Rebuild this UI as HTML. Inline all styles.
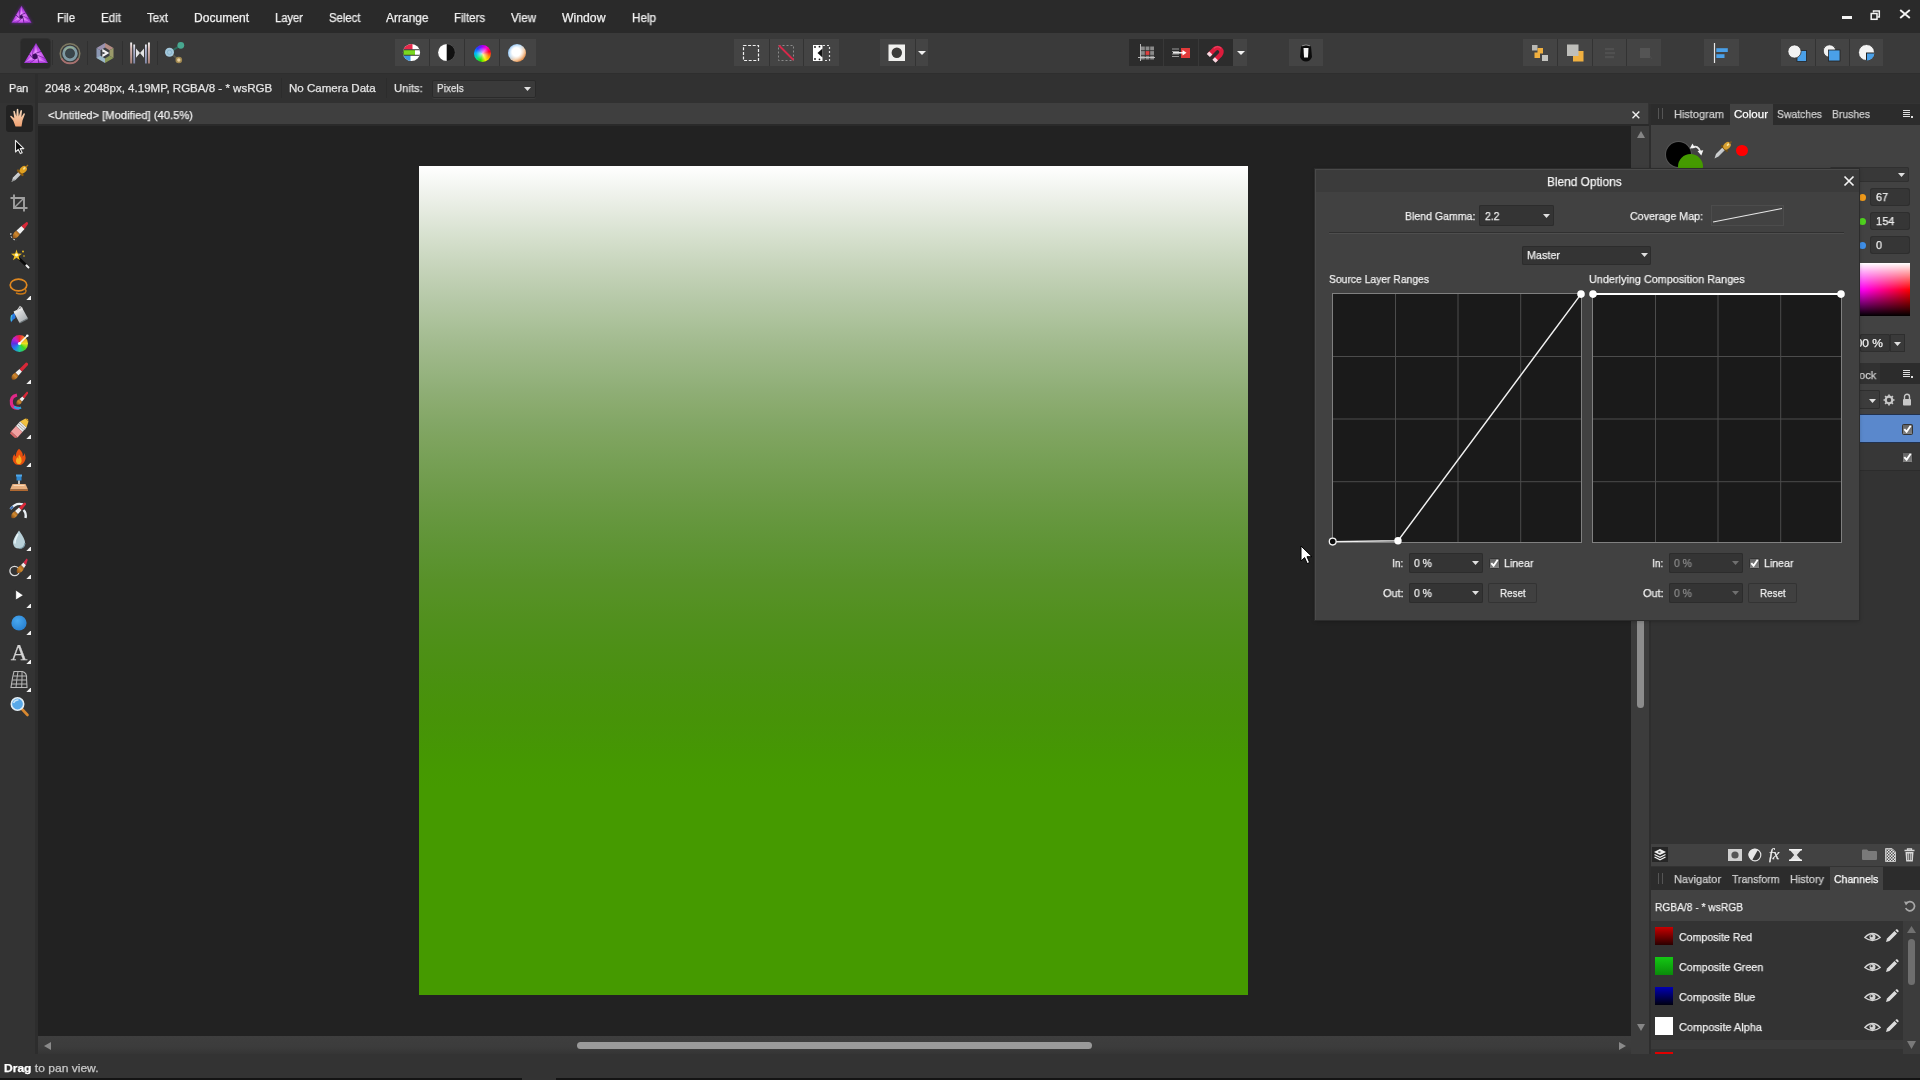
<!DOCTYPE html>
<html lang="en"><head><meta charset="utf-8"><title>Affinity Photo - Blend Options</title>
<style>
html,body{margin:0;padding:0;}
body{width:1920px;height:1080px;overflow:hidden;background:#333333;font-family:'Liberation Sans', sans-serif;position:relative;}
body>div,body>span,body>svg{position:absolute;display:block;}
body>span{white-space:pre;transform-origin:0 50%;will-change:transform;-webkit-text-stroke:0.25px;}
</style></head><body>
<div style="left:0px;top:0px;width:1920px;height:33px;background:#2a2a2a;"></div>
<div style="left:0px;top:33px;width:1920px;height:41px;background:#3a3a3a;"></div>
<div style="left:0px;top:73px;width:1920px;height:1px;background:#2e2e2e;"></div>
<div style="left:0px;top:74px;width:1920px;height:29px;background:#313131;"></div>
<div style="left:0px;top:103px;width:35px;height:951px;background:#333333;"></div>
<div style="left:35px;top:74px;width:3px;height:980px;background:#2d2d2d;"></div>
<div style="left:38px;top:104px;width:1593px;height:934px;background:#222222;"></div>
<div style="left:38px;top:103px;width:1610px;height:21.5px;background:#3f3f3f;"></div>
<div style="left:38px;top:124px;width:1611px;height:2px;background:#2a2a2a;"></div>
<div style="left:1631px;top:126px;width:18px;height:912px;background:#3c3c3c;"></div>
<div style="left:38px;top:1036px;width:1593px;height:18px;background:linear-gradient(#3e3e3e 0%,#3c3c3c 60%,#353535 100%);"></div>
<div style="left:1631px;top:1037px;width:18px;height:17px;background:#3c3c3c;"></div>
<div style="left:0px;top:1054px;width:1920px;height:24px;background:#333333;"></div>
<div style="left:0px;top:1078px;width:1920px;height:2px;background:#141414;"></div>
<div style="left:522px;top:1078px;width:34px;height:2px;background:#333;"></div>
<div style="left:1649px;top:104px;width:271px;height:950px;background:#333333;"></div>
<div style="left:1649px;top:104px;width:2px;height:950px;background:#2e2e2e;"></div>
<span style="left:57px;top:10.1px;font-size:12px;line-height:16px;color:#f0f0f0;transform:scaleX(0.9305);">File</span>
<span style="left:101px;top:10.1px;font-size:12px;line-height:16px;color:#f0f0f0;transform:scaleX(0.9668);">Edit</span>
<span style="left:147px;top:10.1px;font-size:12px;line-height:16px;color:#f0f0f0;transform:scaleX(0.9539);">Text</span>
<span style="left:194px;top:10.1px;font-size:12px;line-height:16px;color:#f0f0f0;transform:scaleX(1.0054);">Document</span>
<span style="left:275px;top:10.1px;font-size:12px;line-height:16px;color:#f0f0f0;transform:scaleX(0.9324);">Layer</span>
<span style="left:329px;top:10.1px;font-size:12px;line-height:16px;color:#f0f0f0;transform:scaleX(0.9443);">Select</span>
<span style="left:386px;top:10.1px;font-size:12px;line-height:16px;color:#f0f0f0;transform:scaleX(0.9952);">Arrange</span>
<span style="left:454px;top:10.1px;font-size:12px;line-height:16px;color:#f0f0f0;transform:scaleX(0.9488);">Filters</span>
<span style="left:511px;top:10.1px;font-size:12px;line-height:16px;color:#f0f0f0;transform:scaleX(0.9691);">View</span>
<span style="left:562px;top:10.1px;font-size:12px;line-height:16px;color:#f0f0f0;transform:scaleX(1.0190);">Window</span>
<span style="left:632px;top:10.1px;font-size:12px;line-height:16px;color:#f0f0f0;transform:scaleX(0.9722);">Help</span>
<div style="left:1842px;top:16px;width:9.5px;height:3px;background:#f4f4f4;"></div>
<svg style="left:1870px;top:10px;" width="11" height="11" viewBox="0 0 11 11"><path d="M3.500 2.500V1H9.300V7H7.500" fill="none" stroke="#f0f0f0" stroke-width="1.500"/><rect x="1.200" y="3.500" width="5.800" height="5.800" fill="none" stroke="#f4f4f4" stroke-width="1.500"/></svg>
<svg style="left:1899px;top:9px;" width="12" height="10" viewBox="0 0 12 10"><path d="M1.200 1L10.800 9M10.800 1L1.200 9" stroke="#f4f4f4" stroke-width="1.900"/></svg>
<span style="left:9px;top:81.3px;font-size:11.5px;line-height:15.5px;color:#f0f0f0;transform:scaleX(0.9429);">Pan</span>
<span style="left:44.6px;top:81.3px;font-size:11.5px;line-height:15.5px;color:#e4e4e4;transform:scaleX(1.0035);">2048 × 2048px, 4.19MP, RGBA/8 - * wsRGB</span>
<div style="left:281px;top:78px;width:1px;height:20px;background:#2c2c2c;"></div>
<span style="left:289.3px;top:81.3px;font-size:11.5px;line-height:15.5px;color:#e4e4e4;transform:scaleX(1.0047);">No Camera Data</span>
<div style="left:386px;top:78px;width:1px;height:20px;background:#2c2c2c;"></div>
<span style="left:394.3px;top:81.3px;font-size:11.5px;line-height:15.5px;color:#e4e4e4;transform:scaleX(0.9760);">Units:</span>
<div style="left:432px;top:79.5px;width:103.5px;height:18.5px;background:#3a3a3a;border-radius:2px;box-shadow:inset 0 0 0 1px #2a2a2a, 0 1px 0 #3c3c3c;"></div>
<span style="left:437px;top:81.3px;font-size:11.5px;line-height:15.5px;color:#e4e4e4;transform:scaleX(0.8701);">Pixels</span>
<svg style="left:524.0px;top:87.0px;" width="7" height="4" viewBox="0 0 7 4"><path d="M0 0H7L3.5 4Z" fill="#e0e0e0"/></svg>
<span style="left:48px;top:107.8px;font-size:11.5px;line-height:15.5px;color:#f0f0f0;transform:scaleX(0.9735);">&lt;Untitled&gt; [Modified] (40.5%)</span>
<svg style="left:1631px;top:109.5px;" width="10" height="10" viewBox="0 0 10 10"><path d="M1.500 1.500L8.300 8.300M8.300 1.500L1.500 8.300" stroke="#f0f0f0" stroke-width="1.400"/></svg>
<div style="left:419px;top:166px;width:829px;height:829px;background:linear-gradient(to bottom,rgb(255,255,255) 0.00%,rgb(245,247,243) 2.08%,rgb(235,239,231) 4.17%,rgb(225,232,219) 6.25%,rgb(215,225,207) 8.33%,rgb(206,218,196) 10.42%,rgb(197,211,185) 12.50%,rgb(188,205,175) 14.58%,rgb(180,199,165) 16.67%,rgb(172,194,155) 18.75%,rgb(164,188,145) 20.83%,rgb(157,183,136) 22.92%,rgb(150,179,127) 25.00%,rgb(143,174,118) 27.08%,rgb(137,170,109) 29.17%,rgb(130,166,101) 31.25%,rgb(125,163,93) 33.33%,rgb(119,160,86) 35.42%,rgb(114,157,79) 37.50%,rgb(109,154,72) 39.58%,rgb(104,152,65) 41.67%,rgb(99,150,59) 43.75%,rgb(95,148,53) 45.83%,rgb(91,147,47) 47.92%,rgb(88,145,41) 50.00%,rgb(85,145,36) 52.08%,rgb(82,144,31) 54.17%,rgb(79,144,27) 56.25%,rgb(77,144,22) 58.33%,rgb(75,144,19) 60.42%,rgb(73,145,15) 62.50%,rgb(72,146,11) 64.58%,rgb(71,147,8) 66.67%,rgb(70,149,6) 68.75%,rgb(69,151,3) 70.83%,rgb(69,153,1) 72.92%,rgb(69,154,0) 75.00%,rgb(69,154,0) 77.08%,rgb(69,154,0) 79.17%,rgb(69,154,0) 81.25%,rgb(69,154,0) 83.33%,rgb(69,154,0) 85.42%,rgb(69,154,0) 87.50%,rgb(69,154,0) 89.58%,rgb(69,154,0) 91.67%,rgb(69,154,0) 93.75%,rgb(69,154,0) 95.83%,rgb(69,154,0) 97.92%,rgb(69,154,0) 100.00%);"></div>
<svg style="left:1636.5px;top:130.5px;" width="8" height="7" viewBox="0 0 8 7"><path d="M4 0L8 7H0Z" fill="#868686"/></svg>
<svg style="left:1636.5px;top:1024px;" width="8" height="7" viewBox="0 0 8 7"><path d="M0 0H8L4 7Z" fill="#868686"/></svg>
<div style="left:1637px;top:600px;width:7px;height:108px;background:#8c8c8c;border-radius:4px;"></div>
<svg style="left:43.5px;top:1041.5px;" width="7" height="8" viewBox="0 0 7 8"><path d="M7 0V8L0 4Z" fill="#8a8a8a"/></svg>
<svg style="left:1619px;top:1041.5px;" width="7" height="8" viewBox="0 0 7 8"><path d="M0 0V8L7 4Z" fill="#8a8a8a"/></svg>
<div style="left:577px;top:1042px;width:515px;height:7px;background:#9a9a9a;border-radius:4px;"></div>
<span style="left:4px;top:1060.8px;font-size:11.5px;line-height:15.5px;color:#c8c8c8;transform:scaleX(1.0484);"><b style="color:#fff">Drag</b> to pan view.</span>
<div style="left:1651px;top:104px;width:269px;height:20.5px;background:#2c2c2c;"></div>
<div style="left:1730px;top:104px;width:43px;height:22px;background:#424242;"></div>
<div style="left:1651px;top:124.5px;width:269px;height:239.5px;background:#424242;"></div>
<div style="left:1658px;top:108px;width:1px;height:11px;background:#555;"></div>
<div style="left:1661.5px;top:108px;width:1px;height:11px;background:#555;"></div>
<span style="left:1674px;top:106.8px;font-size:11.5px;line-height:15.5px;color:#d0d0d0;transform:scaleX(0.9541);">Histogram</span>
<span style="left:1734px;top:106.8px;font-size:11.5px;line-height:15.5px;color:#ffffff;transform:scaleX(1.0032);">Colour</span>
<span style="left:1777px;top:106.8px;font-size:11.5px;line-height:15.5px;color:#d0d0d0;transform:scaleX(0.9025);">Swatches</span>
<span style="left:1832px;top:106.8px;font-size:11.5px;line-height:15.5px;color:#d0d0d0;transform:scaleX(0.9007);">Brushes</span>
<svg style="left:1903px;top:110px;" width="10" height="8" viewBox="0 0 10 8"><path d="M0 0.5H7M0 2.5H7M0 4.5H7M0 6.5H7" stroke="#e0e0e0" stroke-width="1"/><rect x="8" y="6" width="2" height="2" fill="#e0e0e0"/></svg>
<div style="left:1666px;top:142px;width:25px;height:25px;background:#000;border-radius:50%;box-shadow:0 0 0 1px #555;"></div>
<div style="left:1678px;top:154px;width:25px;height:25px;background:#459a00;border-radius:50%;"></div>
<div style="left:1736px;top:145px;width:11.5px;height:11px;background:#ff0000;border-radius:50%;"></div>
<div style="left:1830px;top:167px;width:79px;height:15px;background:#383838;border-radius:2px;box-shadow:inset 0 0 0 1px #303030;"></div>
<svg style="left:1898.0px;top:172.5px;" width="7" height="4" viewBox="0 0 7 4"><path d="M0 0H7L3.5 4Z" fill="#e0e0e0"/></svg>
<div style="left:1870px;top:188px;width:40px;height:18px;background:#363636;border-radius:3px;box-shadow:inset 0 0 0 1px #2e2e2e;"></div>
<div style="left:1858.5px;top:193.5px;width:7px;height:7px;background:#f09a1a;border-radius:50%;"></div>
<span style="left:1875.5px;top:190.3px;font-size:11.5px;line-height:15.5px;color:#f0f0f0;transform:scaleX(0.9377);">67</span>
<div style="left:1870px;top:212px;width:40px;height:18px;background:#363636;border-radius:3px;box-shadow:inset 0 0 0 1px #2e2e2e;"></div>
<div style="left:1858.5px;top:217.5px;width:7px;height:7px;background:#4fd21f;border-radius:50%;"></div>
<span style="left:1875.5px;top:214.3px;font-size:11.5px;line-height:15.5px;color:#f0f0f0;transform:scaleX(0.9642);">154</span>
<div style="left:1870px;top:236px;width:40px;height:18px;background:#363636;border-radius:3px;box-shadow:inset 0 0 0 1px #2e2e2e;"></div>
<div style="left:1858.5px;top:241.5px;width:7px;height:7px;background:#3f8fe8;border-radius:50%;"></div>
<span style="left:1875.5px;top:238.3px;font-size:11.5px;line-height:15.5px;color:#f0f0f0;transform:scaleX(0.9366);">0</span>
<div style="left:1860px;top:263px;width:50px;height:53px;background:linear-gradient(to bottom,#fff 0%,rgba(255,255,255,0) 50%,rgba(0,0,0,0) 50%,#000 100%),linear-gradient(to right,#ff00ff,#ff0000);"></div>
<div style="left:1860px;top:334px;width:30px;height:18px;background:#363636;border-radius:2px;box-shadow:inset 0 0 0 1px #2e2e2e;"></div>
<span style="left:1849px;top:336.4px;font-size:11.5px;line-height:15.5px;color:#f0f0f0;transform:scaleX(1.0426);">100 %</span>
<div style="left:1890px;top:334px;width:15px;height:18px;background:#3a3a3a;box-shadow:inset 0 0 0 1px #2e2e2e;"></div>
<svg style="left:1894.0px;top:341.5px;" width="7" height="4" viewBox="0 0 7 4"><path d="M0 0H7L3.5 4Z" fill="#e0e0e0"/></svg>
<div style="left:1651px;top:363px;width:269px;height:22px;background:#2c2c2c;"></div>
<div style="left:1651px;top:363px;width:229px;height:22px;background:#313131;"></div>
<span style="left:1848.5px;top:367.7px;font-size:11.5px;line-height:15.5px;color:#d0d0d0;transform:scaleX(0.9456);">Stock</span>
<svg style="left:1903px;top:370px;" width="10" height="8" viewBox="0 0 10 8"><path d="M0 0.5H7M0 2.5H7M0 4.5H7M0 6.5H7" stroke="#e0e0e0" stroke-width="1"/><rect x="8" y="6" width="2" height="2" fill="#e0e0e0"/></svg>
<div style="left:1651px;top:384px;width:269px;height:31px;background:#414141;"></div>
<div style="left:1830px;top:390px;width:50px;height:19px;background:#3c3c3c;box-shadow:inset 0 0 0 1px #2e2e2e;border-radius:2px;"></div>
<svg style="left:1868.5px;top:398.5px;" width="7" height="4" viewBox="0 0 7 4"><path d="M0 0H7L3.5 4Z" fill="#e0e0e0"/></svg>
<div style="left:1651px;top:414px;width:269px;height:1px;background:#22324e;"></div>
<div style="left:1651px;top:415px;width:269px;height:27px;background:#5a88cc;"></div>
<div style="left:1651px;top:442px;width:269px;height:1px;background:#22324e;"></div>
<div style="left:1651px;top:443px;width:269px;height:27px;background:#373737;"></div>
<div style="left:1651px;top:470px;width:269px;height:1px;background:#2c2c2c;"></div>
<svg style="left:1901.5px;top:423.5px;" width="11" height="11" viewBox="0 0 11 11"><defs><linearGradient id="cbg" x1="0" y1="0" x2="0" y2="1"><stop offset="0" stop-color="#606060"/><stop offset="1" stop-color="#858585"/></linearGradient></defs><rect x="0.5" y="0.5" width="10" height="10" rx="1" fill="url(#cbg)" stroke="#333"/><path d="M2.300 5.200L4.600 7.800L8.700 1.800" fill="none" stroke="#fff" stroke-width="1.900"/></svg>
<svg style="left:1901.5px;top:451.5px;" width="11" height="11" viewBox="0 0 11 11"><defs><linearGradient id="cbg" x1="0" y1="0" x2="0" y2="1"><stop offset="0" stop-color="#606060"/><stop offset="1" stop-color="#858585"/></linearGradient></defs><rect x="0.5" y="0.5" width="10" height="10" rx="1" fill="url(#cbg)" stroke="#333"/><path d="M2.300 5.200L4.600 7.800L8.700 1.800" fill="none" stroke="#fff" stroke-width="1.900"/></svg>
<div style="left:1651px;top:844px;width:269px;height:22px;background:#424242;"></div>
<div style="left:1651px;top:867px;width:269px;height:23px;background:#2c2c2c;"></div>
<div style="left:1830px;top:867px;width:53px;height:23px;background:#424242;"></div>
<div style="left:1658px;top:873px;width:1px;height:11px;background:#555;"></div>
<div style="left:1661.5px;top:873px;width:1px;height:11px;background:#555;"></div>
<span style="left:1674px;top:871.9px;font-size:11.5px;line-height:15.5px;color:#d0d0d0;transform:scaleX(0.9549);">Navigator</span>
<span style="left:1732px;top:871.9px;font-size:11.5px;line-height:15.5px;color:#d0d0d0;transform:scaleX(0.9118);">Transform</span>
<span style="left:1790px;top:871.9px;font-size:11.5px;line-height:15.5px;color:#d0d0d0;transform:scaleX(0.9502);">History</span>
<span style="left:1833.6px;top:871.9px;font-size:11.5px;line-height:15.5px;color:#ffffff;transform:scaleX(0.9137);">Channels</span>
<div style="left:1651px;top:890px;width:269px;height:31px;background:#424242;"></div>
<span style="left:1655.4px;top:899.9px;font-size:11.5px;line-height:15.5px;color:#f0f0f0;transform:scaleX(0.8873);">RGBA/8 - * wsRGB</span>
<div style="left:1651px;top:921px;width:252px;height:119px;background:#333;"></div>
<div style="left:1903px;top:921px;width:17px;height:133px;background:#3c3c3c;"></div>
<div style="left:1655px;top:927px;width:18px;height:18px;background:linear-gradient(#c80000,#2a0000);"></div>
<span style="left:1679px;top:929.9px;font-size:11.5px;line-height:15.5px;color:#f0f0f0;transform:scaleX(0.9235);">Composite Red</span>
<div style="left:1655px;top:957px;width:18px;height:18px;background:linear-gradient(#14c814,#0a8a0a);"></div>
<span style="left:1679px;top:959.9px;font-size:11.5px;line-height:15.5px;color:#f0f0f0;transform:scaleX(0.9354);">Composite Green</span>
<div style="left:1655px;top:987px;width:18px;height:18px;background:linear-gradient(#0000b4,#000010);"></div>
<span style="left:1679px;top:989.9px;font-size:11.5px;line-height:15.5px;color:#f0f0f0;transform:scaleX(0.9398);">Composite Blue</span>
<div style="left:1655px;top:1017px;width:18px;height:18px;background:#ffffff;"></div>
<span style="left:1679px;top:1019.9px;font-size:11.5px;line-height:15.5px;color:#f0f0f0;transform:scaleX(0.9545);">Composite Alpha</span>
<div style="left:1651px;top:1040px;width:252px;height:9px;background:#3a3a3a;"></div>
<div style="left:1655px;top:1052px;width:18px;height:2px;background:#e00000;"></div>
<svg style="left:1907px;top:926px;" width="9" height="7" viewBox="0 0 9 7"><path d="M4.500 0L9 7H0Z" fill="#707070"/></svg>
<svg style="left:1907px;top:1041px;" width="9" height="8" viewBox="0 0 9 8"><path d="M0 0H9L4.5 8Z" fill="#7a7a7a"/></svg>
<div style="left:1908px;top:939px;width:7px;height:46px;background:#6e6e6e;border-radius:4px;"></div>
<svg style="left:1689px;top:141px;" width="16" height="16" viewBox="0 0 16 16"><path d="M3 6.500Q9 3.500 11.500 11" fill="none" stroke="#e8e8e8" stroke-width="1.700"/><path d="M0.800 7.500L3.500 2.500L6 7Z" fill="#f4f4f4"/><path d="M8.500 10L14.300 9.200L12.300 14.500Z" fill="#f4f4f4"/></svg>
<svg style="left:1712px;top:139px;" width="22" height="22" viewBox="0 0 22 22"><path d="M2.500 19.500L4 15L11 8L13.500 10.500L6.500 17.500Z" fill="url(#metal)"/><path d="M10 7L15 12" stroke="#6a4a10" stroke-width="2.200" stroke-linecap="round"/><ellipse cx="15" cy="6.800" rx="4.200" ry="3.200" transform="rotate(-45 15 6.800)" fill="#d8a030"/><ellipse cx="16" cy="5.600" rx="1.600" ry="1" transform="rotate(-45 16 5.600)" fill="#f8e4a0"/><path d="M17.500 4.500L19.500 2.500" stroke="#7a5a20" stroke-width="1.400"/></svg>
<svg style="left:1883px;top:394px;" width="11.5" height="12" viewBox="0 0 11.5 12"><circle cx="6" cy="6" r="3.300" fill="none" stroke="#c8c8c8" stroke-width="2.200"/><path d="M6 0.500V2.500M6 9.500V11.500M0.500 6H2.500M9.500 6H11.500M2.100 2.100L3.500 3.500M8.500 8.500L9.900 9.900M2.100 9.900L3.500 8.500M8.500 3.500L9.900 2.100" stroke="#c8c8c8" stroke-width="1.700"/></svg>
<svg style="left:1902px;top:393px;" width="10" height="13" viewBox="0 0 10 13"><path d="M2.500 6V3.800A2.500 2.500 0 0 1 7.500 3.800V6" fill="none" stroke="#c8c8c8" stroke-width="1.400"/><rect x="1" y="6" width="8" height="6.500" rx="0.800" fill="#c8c8c8"/></svg>
<div style="left:1652px;top:847px;width:16px;height:15px;background:#262626;"></div>
<svg style="left:1653px;top:848px;" width="14" height="13" viewBox="0 0 14 13"><path d="M7 1L13 4L7 7L1 4Z" fill="#f0f0f0"/><path d="M1.500 6.500L7 9.300L12.500 6.500M1.500 9L7 11.800L12.500 9" fill="none" stroke="#f0f0f0" stroke-width="1.300"/><path d="M5.500 3L8.500 4L5.500 5Z" fill="#333"/></svg>
<svg style="left:1728px;top:849px;" width="14" height="11.5" viewBox="0 0 14 11.5"><rect width="14" height="12" fill="#d0d0d0"/><circle cx="7" cy="6" r="3.600" fill="#555"/></svg>
<svg style="left:1748px;top:848px;" width="14" height="14" viewBox="0 0 14 14"><circle cx="7" cy="7" r="5.800" fill="#3a3a3a" stroke="#e0e0e0" stroke-width="1.200"/><path d="M9.800 2A5.800 5.800 0 1 0 4.200 12Z" fill="#e8e8e8"/></svg>
<span style="left:1769px;top:845px;font-family:'Liberation Serif',serif;font-style:italic;font-size:15px;line-height:18px;color:#f0f0f0;letter-spacing:-0.5px;">fx</span>
<svg style="left:1789px;top:849px;" width="13" height="11.5" viewBox="0 0 13 11.5"><path d="M0 0H13L7.800 6L13 12H0L5.200 6Z" fill="#e0e0e0"/><path d="M0 0H13V1.500H0ZM0 10.500H13V12H0Z" fill="#f4f4f4"/></svg>
<svg style="left:1862px;top:849px;" width="15" height="11" viewBox="0 0 15 11"><path d="M0 1.500Q0 0.500 1 0.500H5L6.500 2H14Q15 2 15 3V10Q15 11 14 11H1Q0 11 0 10Z" fill="#7a7a7a"/></svg>
<svg style="left:1885px;top:848px;" width="11" height="14" viewBox="0 0 11 14"><defs><pattern id="chk" width="3" height="3" patternUnits="userSpaceOnUse"><rect width="3" height="3" fill="#e8e8e8"/><rect width="1.500" height="1.500" fill="#555"/><rect x="1.500" y="1.500" width="1.500" height="1.500" fill="#555"/></pattern></defs><path d="M0.500 0.500H7L10.500 4V13.500H0.500Z" fill="url(#chk)" stroke="#d8d8d8" stroke-width="0.800"/></svg>
<svg style="left:1904px;top:848px;" width="11" height="14" viewBox="0 0 11 14"><path d="M0.500 2.500H10.500M3.500 2.500V0.800H7.500V2.500" stroke="#d8d8d8" stroke-width="1.300" fill="none"/><path d="M1.500 4H9.500L8.800 13.500H2.200Z" fill="#d8d8d8"/><path d="M3.800 5.500V12M5.500 5.500V12M7.200 5.500V12" stroke="#444" stroke-width="0.800"/></svg>
<svg style="left:1904px;top:900px;" width="11.5" height="12" viewBox="0 0 11.5 12"><path d="M2.200 3.500A4.600 4.600 0 1 1 1.700 8" fill="none" stroke="#a8a8a8" stroke-width="1.700"/><path d="M0 1.500L4.500 2L2 5.500Z" fill="#a8a8a8"/></svg>
<svg style="left:1864px;top:931px;" width="17" height="11.5" viewBox="0 0 17 11.5"><path d="M0.800 6.500Q8.500 -1.500 16.200 6.500Q8.500 12.500 0.800 6.500Z" fill="none" stroke="#d4d4d4" stroke-width="1.300"/><circle cx="8.500" cy="6" r="3" fill="#d4d4d4"/><circle cx="7.600" cy="5.200" r="1.100" fill="#444"/></svg>
<svg style="left:1885px;top:929px;" width="14" height="14" viewBox="0 0 14 14"><path d="M1 13L2 9.500L9.500 2L12 4.500L4.500 12Z" fill="#dcdcdc"/><path d="M10.300 1.200L11.300 0.300Q12 0 12.600 0.600L13.400 1.400Q14 2 13.500 2.700L12.700 3.600Z" fill="#dcdcdc"/></svg>
<svg style="left:1864px;top:961px;" width="17" height="11.5" viewBox="0 0 17 11.5"><path d="M0.800 6.500Q8.500 -1.500 16.200 6.500Q8.500 12.500 0.800 6.500Z" fill="none" stroke="#d4d4d4" stroke-width="1.300"/><circle cx="8.500" cy="6" r="3" fill="#d4d4d4"/><circle cx="7.600" cy="5.200" r="1.100" fill="#444"/></svg>
<svg style="left:1885px;top:959px;" width="14" height="14" viewBox="0 0 14 14"><path d="M1 13L2 9.500L9.500 2L12 4.500L4.500 12Z" fill="#dcdcdc"/><path d="M10.300 1.200L11.300 0.300Q12 0 12.600 0.600L13.400 1.400Q14 2 13.500 2.700L12.700 3.600Z" fill="#dcdcdc"/></svg>
<svg style="left:1864px;top:991px;" width="17" height="11.5" viewBox="0 0 17 11.5"><path d="M0.800 6.500Q8.500 -1.500 16.200 6.500Q8.500 12.500 0.800 6.500Z" fill="none" stroke="#d4d4d4" stroke-width="1.300"/><circle cx="8.500" cy="6" r="3" fill="#d4d4d4"/><circle cx="7.600" cy="5.200" r="1.100" fill="#444"/></svg>
<svg style="left:1885px;top:989px;" width="14" height="14" viewBox="0 0 14 14"><path d="M1 13L2 9.500L9.500 2L12 4.500L4.500 12Z" fill="#dcdcdc"/><path d="M10.300 1.200L11.300 0.300Q12 0 12.600 0.600L13.400 1.400Q14 2 13.500 2.700L12.700 3.600Z" fill="#dcdcdc"/></svg>
<svg style="left:1864px;top:1021px;" width="17" height="11.5" viewBox="0 0 17 11.5"><path d="M0.800 6.500Q8.500 -1.500 16.200 6.500Q8.500 12.500 0.800 6.500Z" fill="none" stroke="#d4d4d4" stroke-width="1.300"/><circle cx="8.500" cy="6" r="3" fill="#d4d4d4"/><circle cx="7.600" cy="5.200" r="1.100" fill="#444"/></svg>
<svg style="left:1885px;top:1019px;" width="14" height="14" viewBox="0 0 14 14"><path d="M1 13L2 9.500L9.500 2L12 4.500L4.500 12Z" fill="#dcdcdc"/><path d="M10.300 1.200L11.300 0.300Q12 0 12.600 0.600L13.400 1.400Q14 2 13.500 2.700L12.700 3.600Z" fill="#dcdcdc"/></svg>
<div style="left:1314.5px;top:169px;width:544px;height:451px;background:#414141;box-shadow:inset 1px 1px 0 #4a4a4a, 0 0 0 1px #2c2c2c, 0 1px 4px rgba(0,0,0,.3);"></div>
<div style="left:1315.5px;top:170px;width:543px;height:22px;background:#3b3b3b;"></div>
<span style="left:1547.4px;top:172.7px;font-size:13px;line-height:17px;color:#f4f4f4;transform:scaleX(0.9134);">Blend Options</span>
<svg style="left:1843px;top:175px;" width="11.5" height="12" viewBox="0 0 11.5 12"><path d="M1.5 1.5L10.5 10.5M10.5 1.5L1.5 10.5" stroke="#f4f4f4" stroke-width="1.7"/></svg>
<span style="left:1405px;top:208.8px;font-size:11.5px;line-height:15.5px;color:#f0f0f0;transform:scaleX(0.9178);">Blend Gamma:</span>
<div style="left:1479px;top:205px;width:75px;height:21px;background:#343434;border-radius:2px;box-shadow:inset 0 0 0 1px #2c2c2c;"></div>
<span style="left:1485px;top:208.8px;font-size:11.5px;line-height:15.5px;color:#f0f0f0;transform:scaleX(0.9062);">2.2</span>
<svg style="left:1543.3px;top:213.5px;" width="7" height="4" viewBox="0 0 7 4"><path d="M0 0H7L3.5 4Z" fill="#e0e0e0"/></svg>
<span style="left:1630px;top:208.8px;font-size:11.5px;line-height:15.5px;color:#f0f0f0;transform:scaleX(0.9285);">Coverage Map:</span>
<div style="left:1711px;top:205px;width:73px;height:21px;background:#424242;box-shadow:inset 0 0 0 1px #4c4c4c;"></div>
<svg style="left:1711px;top:205px;" width="73" height="21" viewBox="0 0 73 21"><path d="M2 17L71 3.5" stroke="#e6e6e6" stroke-width="1.1" fill="none"/></svg>
<div style="left:1329px;top:232px;width:515px;height:1px;background:#303030;"></div>
<div style="left:1329px;top:233px;width:515px;height:1px;background:#4e4e4e;"></div>
<div style="left:1522px;top:246px;width:129px;height:19px;background:#343434;border-radius:2px;box-shadow:inset 0 0 0 1px #2c2c2c;"></div>
<span style="left:1527px;top:247.8px;font-size:11.5px;line-height:15.5px;color:#f0f0f0;transform:scaleX(0.9387);">Master</span>
<svg style="left:1640.5px;top:253.0px;" width="7" height="4" viewBox="0 0 7 4"><path d="M0 0H7L3.5 4Z" fill="#e0e0e0"/></svg>
<span style="left:1329px;top:271.9px;font-size:11.5px;line-height:15.5px;color:#f0f0f0;transform:scaleX(0.8990);">Source Layer Ranges</span>
<span style="left:1589.4px;top:271.9px;font-size:11.5px;line-height:15.5px;color:#f0f0f0;transform:scaleX(0.9435);">Underlying Composition Ranges</span>
<svg style="left:1325px;top:286px;" width="530" height="265" viewBox="0 0 530 265"><g transform="translate(7,7)"><rect x="0.5" y="0.5" width="249" height="249" fill="#1a1a1a" stroke="#808080"/><path d="M63.5 1V249M1 63.5H249" stroke="#4c4c4c" stroke-width="1"/><path d="M126 1V249M1 126.0H249" stroke="#4c4c4c" stroke-width="1"/><path d="M188.7 1V249M1 188.7H249" stroke="#4c4c4c" stroke-width="1"/></g><g transform="translate(267,7)"><rect x="0.5" y="0.5" width="249" height="249" fill="#1a1a1a" stroke="#808080"/><path d="M63.5 1V249M1 63.5H249" stroke="#4c4c4c" stroke-width="1"/><path d="M126 1V249M1 126.0H249" stroke="#4c4c4c" stroke-width="1"/><path d="M188.7 1V249M1 188.7H249" stroke="#4c4c4c" stroke-width="1"/></g><path d="M7.700 255.600L73 254.700L256 8.100" stroke="#f0f0f0" stroke-width="1.400" fill="none"/><circle cx="7.700" cy="255.600" r="3.400" fill="#0c0c0c" stroke="#f4f4f4" stroke-width="1.300"/><circle cx="73" cy="254.700" r="3.700" fill="#fff"/><circle cx="256" cy="8.100" r="3.800" fill="#fff"/><path d="M268 8.100H516" stroke="#fff" stroke-width="2"/><circle cx="268" cy="8.100" r="3.800" fill="#fff"/><circle cx="516" cy="8.100" r="3.800" fill="#fff"/></svg>
<span style="left:1392.4px;top:555.9px;font-size:11.5px;line-height:15.5px;color:#f0f0f0;transform:scaleX(0.8830);">In:</span>
<div style="left:1408.5px;top:553px;width:74px;height:20px;background:#343434;border-radius:2px;box-shadow:inset 0 0 0 1px #2c2c2c;"></div>
<span style="left:1414px;top:555.9px;font-size:11.5px;line-height:15.5px;color:#f0f0f0;transform:scaleX(0.9078);">0 %</span>
<svg style="left:1472.0px;top:561.0px;" width="7" height="4" viewBox="0 0 7 4"><path d="M0 0H7L3.5 4Z" fill="#e0e0e0"/></svg>
<svg style="left:1489px;top:558px;" width="11" height="11" viewBox="0 0 11 11"><defs><linearGradient id="cbg" x1="0" y1="0" x2="0" y2="1"><stop offset="0" stop-color="#606060"/><stop offset="1" stop-color="#858585"/></linearGradient></defs><rect x="0.5" y="0.5" width="10" height="10" rx="1" fill="url(#cbg)" stroke="#333"/><path d="M2.300 5.200L4.600 7.800L8.700 1.800" fill="none" stroke="#fff" stroke-width="1.900"/></svg>
<span style="left:1504px;top:555.9px;font-size:11.5px;line-height:15.5px;color:#f0f0f0;transform:scaleX(0.9196);">Linear</span>
<span style="left:1383px;top:585.9px;font-size:11.5px;line-height:15.5px;color:#f0f0f0;transform:scaleX(0.9524);">Out:</span>
<div style="left:1408.5px;top:583px;width:74px;height:20px;background:#343434;border-radius:2px;box-shadow:inset 0 0 0 1px #2c2c2c;"></div>
<span style="left:1414px;top:585.9px;font-size:11.5px;line-height:15.5px;color:#f0f0f0;transform:scaleX(0.9078);">0 %</span>
<svg style="left:1472.0px;top:591.0px;" width="7" height="4" viewBox="0 0 7 4"><path d="M0 0H7L3.5 4Z" fill="#e0e0e0"/></svg>
<div style="left:1488px;top:583px;width:49px;height:20px;background:#404040;border-radius:2px;box-shadow:inset 0 0 0 1px #333;"></div>
<span style="left:1500.3px;top:585.9px;font-size:11.5px;line-height:15.5px;color:#f0f0f0;transform:scaleX(0.8553);">Reset</span>
<span style="left:1652.4px;top:555.9px;font-size:11.5px;line-height:15.5px;color:#f0f0f0;transform:scaleX(0.8830);">In:</span>
<div style="left:1668.5px;top:553px;width:74px;height:20px;background:#343434;border-radius:2px;box-shadow:inset 0 0 0 1px #2c2c2c;"></div>
<span style="left:1674px;top:555.9px;font-size:11.5px;line-height:15.5px;color:#8a8a8a;transform:scaleX(0.9078);">0 %</span>
<svg style="left:1732.0px;top:561.0px;" width="7" height="4" viewBox="0 0 7 4"><path d="M0 0H7L3.5 4Z" fill="#707070"/></svg>
<svg style="left:1749px;top:558px;" width="11" height="11" viewBox="0 0 11 11"><defs><linearGradient id="cbg" x1="0" y1="0" x2="0" y2="1"><stop offset="0" stop-color="#606060"/><stop offset="1" stop-color="#858585"/></linearGradient></defs><rect x="0.5" y="0.5" width="10" height="10" rx="1" fill="url(#cbg)" stroke="#333"/><path d="M2.300 5.200L4.600 7.800L8.700 1.800" fill="none" stroke="#fff" stroke-width="1.900"/></svg>
<span style="left:1764px;top:555.9px;font-size:11.5px;line-height:15.5px;color:#f0f0f0;transform:scaleX(0.9196);">Linear</span>
<span style="left:1643px;top:585.9px;font-size:11.5px;line-height:15.5px;color:#f0f0f0;transform:scaleX(0.9524);">Out:</span>
<div style="left:1668.5px;top:583px;width:74px;height:20px;background:#343434;border-radius:2px;box-shadow:inset 0 0 0 1px #2c2c2c;"></div>
<span style="left:1674px;top:585.9px;font-size:11.5px;line-height:15.5px;color:#8a8a8a;transform:scaleX(0.9078);">0 %</span>
<svg style="left:1732.0px;top:591.0px;" width="7" height="4" viewBox="0 0 7 4"><path d="M0 0H7L3.5 4Z" fill="#707070"/></svg>
<div style="left:1748px;top:583px;width:49px;height:20px;background:#404040;border-radius:2px;box-shadow:inset 0 0 0 1px #333;"></div>
<span style="left:1760.3px;top:585.9px;font-size:11.5px;line-height:15.5px;color:#f0f0f0;transform:scaleX(0.8553);">Reset</span>
<svg style="left:1300px;top:545px;" width="13" height="20" viewBox="0 0 13 20"><path d="M1 1V16L4.6 12.6L7.2 18.6L9.6 17.5L7 11.7H12Z" fill="#fff" stroke="#000" stroke-width="1"/></svg>
<svg style="left:8px;top:2px;" width="27" height="24" viewBox="0 0 27 24"><defs><radialGradient id="lg" cx="50%" cy="65%" r="65%"><stop offset="0" stop-color="#f4a4ff"/><stop offset="0.5" stop-color="#c048ea"/><stop offset="1" stop-color="#7a1eb4"/></radialGradient><filter id="glow" x="-30%" y="-30%" width="160%" height="160%"><feGaussianBlur stdDeviation="1.6"/></filter></defs><path d="M13.500 3L24.500 21.500H2.500Z" fill="#8020c0" opacity="0.55" filter="url(#glow)"/><g transform="translate(3,3.300)"><path d="M10.5 0.5L20.5 17.5H0.5Z" fill="url(#lg)"/><path d="M10.5 0.5L11.9 10.7L9.8 9.7Z" fill="#f4b0ff" opacity="0.55"/><path d="M20.5 17.5L10.4 13.5L12.1 12.2Z" fill="#f0a8ff" opacity="0.5"/><path d="M0.5 17.5L8.3 11.2L8.9 13.1Z" fill="#f4b8ff" opacity="0.5"/><path d="M9.8 9.7L14.7 7.6M12.1 12.2L12.9 17.5M8.9 13.1L5.0 9.8" stroke="#5a1488" stroke-width="1" opacity="0.8"/><path d="M11.9 10.7L18.3 13.8M10.4 13.5L5.5 17.5M8.3 11.2L8.5 3.9" stroke="#6a1a98" stroke-width="0.9" opacity="0.7"/><circle cx="10.2" cy="11.6" r="1.9" fill="#3a0c5c"/></g></svg>
<div style="left:20.5px;top:38.5px;width:29px;height:29px;background:#2a2a2a;border-radius:3.500px;box-shadow:0 0 0 1px #303030;"></div>
<svg style="left:23px;top:42px;" width="26" height="22" viewBox="0 0 26 22"><g transform="translate(0.500,0.500)"><path d="M12.5 0.5L24.5 20.5H0.5Z" fill="url(#lg)"/><path d="M12.5 0.5L13.9 12.7L11.0 11.3Z" fill="#f4b0ff" opacity="0.55"/><path d="M24.5 20.5L11.8 16.7L14.2 14.8Z" fill="#f0a8ff" opacity="0.5"/><path d="M0.5 20.5L8.8 13.5L9.6 16.2Z" fill="#f4b8ff" opacity="0.5"/><path d="M11.0 11.3L17.5 8.9M14.2 14.8L15.4 20.5M9.6 16.2L5.9 11.5" stroke="#5a1488" stroke-width="1" opacity="0.8"/><path d="M13.9 12.7L21.9 16.1M11.8 16.7L6.5 20.5M8.8 13.5L10.1 4.5" stroke="#6a1a98" stroke-width="0.9" opacity="0.7"/><circle cx="11.5" cy="14" r="2.7" fill="#3a0c5c"/></g></svg>
<div style="left:52px;top:40px;width:1px;height:25px;background:#303030;"></div>
<svg style="left:58px;top:41px;" width="24" height="24" viewBox="0 0 24 24"><circle cx="12" cy="12.500" r="9.800" fill="none" stroke="#8a8468" stroke-width="1.500" opacity="0.850"/><path d="M3.500 17.500A9.800 9.800 0 0 0 20.500 17.500" stroke="#a87070" stroke-width="1.600" fill="none"/><circle cx="12" cy="12.500" r="6.300" fill="none" stroke="#7e9aa4" stroke-width="2.800"/><path d="M6.500 9.500A6.300 6.300 0 0 1 16 7.600" stroke="#9ab48a" stroke-width="1.400" fill="none" opacity="0.800"/><circle cx="12" cy="12.500" r="4.200" fill="#39464c"/></svg>
<div style="left:87px;top:41px;width:1px;height:24px;background:#303030;"></div>
<svg style="left:93px;top:41px;" width="24" height="24" viewBox="0 0 24 24"><path d="M12 2L20.500 7V17L12 22L3.500 17V7Z" fill="#3a3e42"/><path d="M3.500 7L7.500 9.300V17.500L3.500 17Z" fill="#8c98b4"/><path d="M3.500 7L12 2L12 6.500L7.500 9.300Z" fill="#9a92b0"/><path d="M12 2L20.500 7L16.500 9.300L12 6.500Z" fill="#b48c84"/><path d="M20.500 7V17L16.500 14.700V9.300Z" fill="#9a9a6a"/><path d="M20.500 17L12 22V17.500L16.500 14.700Z" fill="#8a9858"/><path d="M12 22L3.500 17L7.500 14.700L12 17.500Z" fill="#9cb8c8"/><path d="M9.300 7.800L16.300 12L9.300 16.200Z" fill="#f4f4f4"/><path d="M9.300 10.800L12.500 12L9.300 13.500Z" fill="#3a3e42"/></svg>
<div style="left:122px;top:41px;width:1px;height:24px;background:#303030;"></div>
<svg style="left:128px;top:41px;" width="24" height="24" viewBox="0 0 24 24"><defs><linearGradient id="tmp" x1="0" y1="0" x2="0" y2="1"><stop offset="0" stop-color="#f4f4f4"/><stop offset="0.300" stop-color="#d8b8b4"/><stop offset="1" stop-color="#a88078"/></linearGradient><linearGradient id="tmb" x1="0" y1="0" x2="0" y2="1"><stop offset="0" stop-color="#f0f0f4"/><stop offset="0.300" stop-color="#b0b4d0"/><stop offset="1" stop-color="#8088a8"/></linearGradient></defs><rect x="2.200" y="1.500" width="1.900" height="21" fill="url(#tmp)"/><rect x="20" y="1.500" width="1.900" height="21" fill="url(#tmp)"/><rect x="5.300" y="3.500" width="1.800" height="19" fill="url(#tmb)"/><rect x="17" y="3.500" width="1.800" height="19" fill="url(#tmb)"/><path d="M8 7.500L12 12L8 16.700ZM16 7.500L12 12L16 16.700Z" fill="#e4e4e4"/></svg>
<div style="left:157px;top:41px;width:1px;height:24px;background:#303030;"></div>
<svg style="left:163px;top:41px;" width="24" height="24" viewBox="0 0 24 24"><path d="M6.500 11.300L17.800 4.200" stroke="#2e6a5c" stroke-width="1.800"/><path d="M6.500 11.300L15.800 19" stroke="#55554a" stroke-width="1.800"/><circle cx="6.500" cy="11.300" r="4.500" fill="#a4c8dc"/><circle cx="6.500" cy="11.300" r="2.200" fill="none" stroke="#88b4cc" stroke-width="1"/><circle cx="17.800" cy="4.300" r="3.400" fill="#48a890"/><circle cx="15.800" cy="19" r="3.300" fill="#a08850"/><circle cx="15.800" cy="19" r="1.700" fill="#e8d0a0"/></svg>
<div style="left:395px;top:39px;width:141px;height:26.5px;background:#444444;"></div>
<div style="left:429px;top:39px;width:1px;height:26.5px;background:#333;"></div>
<div style="left:464px;top:39px;width:1px;height:26.5px;background:#333;"></div>
<div style="left:499px;top:39px;width:1px;height:26.5px;background:#333;"></div>
<svg style="left:402px;top:43px;" width="19" height="19" viewBox="0 0 19 19"><defs><clipPath id="c1"><circle cx="9.5" cy="9.5" r="8.6"/></clipPath></defs><g clip-path="url(#c1)"><rect width="19" height="19" fill="#fff"/><rect x="0" y="0" width="10.5" height="6.5" fill="#e8284a"/><rect x="0" y="12.5" width="8.5" height="7" fill="#3a98e0"/><rect x="0" y="6.3" width="19" height="6.4" fill="#222"/><rect x="1.5" y="7.2" width="11.5" height="4.6" fill="#7ad820"/><rect x="13" y="7.2" width="5" height="4.6" fill="#fff"/></g></svg>
<svg style="left:437px;top:43px;" width="19" height="19" viewBox="0 0 19 19"><circle cx="9.5" cy="9.5" r="8.8" fill="#111" stroke="#555" stroke-width="0.8"/><path d="M9.7 0.9A8.6 8.6 0 0 0 9.7 18.1Z" fill="#fff"/></svg>
<div style="left:473.5px;top:44.5px;width:17px;height:17px;background:radial-gradient(circle at 50% 50%,rgba(255,255,255,.75) 0%,rgba(255,255,255,0) 55%),conic-gradient(from 75deg,#ff0020,#ff9000,#f8f000,#30e000,#00e0a0,#00b0ff,#2040ff,#9000ff,#ff00d0,#ff0020);border-radius:50%;"></div>
<div style="left:508px;top:44px;width:18px;height:18px;background:radial-gradient(circle at 46% 44%,#fff 0%,#fff 30%,rgba(255,255,255,0) 68%),linear-gradient(135deg,#2a8ae8 0%,#9cccf4 38%,#f4c090 62%,#d86a18 100%);border-radius:50%;"></div>
<div style="left:734px;top:39px;width:105px;height:26.5px;background:#444444;"></div>
<div style="left:769px;top:39px;width:1px;height:26.5px;background:#333;"></div>
<div style="left:803px;top:39px;width:1px;height:26.5px;background:#333;"></div>
<svg style="left:742px;top:44px;" width="18" height="18" viewBox="0 0 18 18"><rect x="1.5" y="1.5" width="15" height="15" fill="none" stroke="#f0f0f0" stroke-width="1.2" stroke-dasharray="3 1.6"/></svg>
<svg style="left:777px;top:44px;" width="18" height="18" viewBox="0 0 18 18"><rect x="1.5" y="1.5" width="15" height="15" fill="none" stroke="#8a8a8a" stroke-width="1" stroke-dasharray="2 2"/><path d="M2 1.5L16.5 16" stroke="#d8284a" stroke-width="1.8"/></svg>
<svg style="left:812px;top:44px;" width="19" height="18" viewBox="0 0 19 18"><rect x="1" y="1" width="9.5" height="16" fill="#fff"/><path d="M10.5 4.5V13.500L5.500 9Z" fill="#111"/><path d="M2.5 1V3M6 1V3M2.5 15V17M6 15V17" stroke="#222" stroke-width="1.2" opacity="0"/><path d="M11 1.5H17.500V16.500H11" fill="none" stroke="#e0e0e0" stroke-width="1.2" stroke-dasharray="2 2"/><circle cx="3" cy="3" r="0.9" fill="#111"/><circle cx="3" cy="15" r="0.9" fill="#111"/><circle cx="7.5" cy="15.300" r="0.9" fill="#111"/><circle cx="7.5" cy="2.700" r="0.9" fill="#111"/></svg>
<div style="left:880px;top:39px;width:48px;height:26.5px;background:#444444;"></div>
<div style="left:915px;top:39px;width:1px;height:26.5px;background:#333;"></div>
<svg style="left:888px;top:44px;" width="18" height="18" viewBox="0 0 18 18"><rect x="0.5" y="0.5" width="16.500" height="16.500" fill="#f0f0ee"/><circle cx="8.8" cy="8.8" r="5.2" fill="#3c3c3a"/></svg>
<svg style="left:917.5px;top:51.0px;" width="8" height="4" viewBox="0 0 8 4"><path d="M0 0H8L4.0 4Z" fill="#f0f0f0"/></svg>
<div style="left:1129px;top:39px;width:104px;height:26.5px;background:#2c2c2c;"></div>
<div style="left:1233px;top:39px;width:14px;height:26.5px;background:#444444;"></div>
<div style="left:1163px;top:39px;width:1px;height:26.5px;background:#383838;"></div>
<div style="left:1198px;top:39px;width:1px;height:26.5px;background:#383838;"></div>
<svg style="left:1138px;top:44px;" width="18" height="18" viewBox="0 0 18 18"><rect x="3.0" y="2.5" width="3.8" height="3.8" fill="#8a8a8a"/><rect x="7.6" y="2.5" width="3.8" height="3.8" fill="#8a8a8a"/><rect x="12.2" y="2.5" width="3.8" height="3.8" fill="#8a8a8a"/><rect x="3.0" y="7.1" width="3.8" height="3.8" fill="#8a8a8a"/><rect x="7.6" y="7.1" width="3.8" height="3.8" fill="#e04040"/><rect x="12.2" y="7.1" width="3.8" height="3.8" fill="#8a8a8a"/><rect x="3.0" y="11.7" width="3.8" height="3.8" fill="#8a8a8a"/><rect x="7.6" y="11.7" width="3.8" height="3.8" fill="#8a8a8a"/><rect x="12.2" y="11.7" width="3.8" height="3.8" fill="#8a8a8a"/><path d="M2.5 0V17M0 13.500H17" stroke="#c8c8c8" stroke-width="0.9"/></svg>
<svg style="left:1171px;top:47px;" width="20" height="12" viewBox="0 0 20 12"><path d="M1 2H8M1 4.500H8M1 7H8M1 9.500H8" stroke="#9a9a9a" stroke-width="1.2"/><rect x="10" y="1" width="9" height="10" fill="#e03a3a"/><path d="M2 5.800H13" stroke="#fff" stroke-width="1.4"/><path d="M11.500 3L15.500 5.800L11.500 8.600Z" fill="#fff"/></svg>
<svg style="left:1205px;top:42px;" width="22" height="22" viewBox="0 0 22 22"><g transform="rotate(45 12.500 10)"><path d="M8.500 18V10A4 4 0 0 1 16.500 10V18" fill="none" stroke="#dc1c3c" stroke-width="4.400"/><path d="M6.300 15.500H10.700V19H6.300ZM14.300 15.500H18.700V19H14.300Z" fill="#f8d8e0"/><path d="M7.300 10A5.200 5.200 0 0 1 12.500 4.800" fill="none" stroke="#f06080" stroke-width="1" opacity="0.700"/></g></svg>
<svg style="left:1236.5px;top:50.5px;" width="8" height="4" viewBox="0 0 8 4"><path d="M0 0H8L4.0 4Z" fill="#f0f0f0"/></svg>
<div style="left:1289px;top:39px;width:34px;height:26.5px;background:#444444;"></div>
<svg style="left:1299px;top:43px;" width="14" height="19" viewBox="0 0 14 19"><path d="M2 3.500Q7 0.500 12 3.500L13 14Q11 18.500 7 18.500Q3 18.500 1 14Z" fill="#0c0c0c"/><path d="M4.500 5H9.500L9 14.500H5Z" fill="#f4f4f4"/><path d="M3 2.800Q7 1 11 2.800" stroke="#888" stroke-width="1" fill="none"/></svg>
<div style="left:1523px;top:39px;width:138px;height:26.5px;background:#444444;"></div>
<div style="left:1557px;top:39px;width:1px;height:26.5px;background:#333;"></div>
<div style="left:1592px;top:39px;width:1px;height:26.5px;background:#333;"></div>
<div style="left:1626px;top:39px;width:1px;height:26.5px;background:#333;"></div>
<svg style="left:1530px;top:43px;" width="20" height="20" viewBox="0 0 20 20"><rect x="2" y="2" width="5.500" height="5.500" fill="#b8b8b4"/><path d="M7.500 5H13V10.500H10V15H4.500V9.500H7.500Z" fill="#f0b040"/><rect x="12" y="12" width="6" height="6" fill="#c4c4c0"/></svg>
<svg style="left:1565px;top:43px;" width="20" height="20" viewBox="0 0 20 20"><path d="M12 8H18.500V18.500H8V13H12Z" fill="#f0b040"/><rect x="2" y="1.500" width="11.500" height="11.500" fill="#bebeba"/></svg>
<svg style="left:1600px;top:43px;" width="20" height="20" viewBox="0 0 20 20"><rect x="5" y="5" width="9" height="2.200" fill="#505050"/><rect x="5" y="9" width="10" height="2.200" fill="#505050"/><rect x="5" y="13" width="9" height="2.200" fill="#505050"/></svg>
<svg style="left:1635px;top:43px;" width="20" height="20" viewBox="0 0 20 20"><rect x="5" y="5" width="10" height="10" fill="#545454"/><path d="M15 13L17 16" stroke="#4c4c4c"/></svg>
<div style="left:1704px;top:39px;width:35px;height:26.5px;background:#444444;"></div>
<svg style="left:1712px;top:42px;" width="18" height="22" viewBox="0 0 18 22"><path d="M2.500 1V21" stroke="#e8e8e8" stroke-width="1.2"/><rect x="4.300" y="6.200" width="11.500" height="3.800" fill="#4aa0e8"/><rect x="4.300" y="12.200" width="8.200" height="3.800" fill="#4aa0e8"/></svg>
<div style="left:1781px;top:39px;width:102px;height:26.5px;background:#444444;"></div>
<div style="left:1815px;top:39px;width:1px;height:26.5px;background:#333;"></div>
<div style="left:1849px;top:39px;width:1px;height:26.5px;background:#333;"></div>
<svg style="left:1786px;top:43px;" width="24" height="20" viewBox="0 0 24 20"><rect x="11" y="7.500" width="9.500" height="11" fill="#4aa0e8" stroke="#222" stroke-width="0.8"/><circle cx="8.500" cy="8.500" r="6.600" fill="#f2f2f2" stroke="#333" stroke-width="0.8"/></svg>
<svg style="left:1820px;top:43px;" width="24" height="20" viewBox="0 0 24 20"><circle cx="9.500" cy="8" r="6.200" fill="#f2f2f2" stroke="#333" stroke-width="0.8"/><rect x="8.500" y="7" width="11.500" height="11" fill="#4aa0e8" stroke="#222" stroke-width="0.8"/></svg>
<svg style="left:1855px;top:43px;" width="24" height="20" viewBox="0 0 24 20"><defs><clipPath id="c2"><circle cx="11.500" cy="9.500" r="8"/></clipPath></defs><circle cx="11.500" cy="9.500" r="8" fill="#f4f4f4" stroke="#333" stroke-width="0.8"/><rect x="11.500" y="10" width="10" height="10" fill="#4aa0e8" stroke="#222" stroke-width="1" clip-path="url(#c2)"/></svg>
<div style="left:6px;top:105px;width:27px;height:27px;background:#222;border-radius:3px;"></div>
<svg style="left:7px;top:106px;" width="24" height="24" viewBox="0 0 24 24"><defs>
<linearGradient id="wood" x1="0" y1="1" x2="1" y2="0"><stop offset="0" stop-color="#7a4210"/><stop offset="0.5" stop-color="#d08a30"/><stop offset="1" stop-color="#8a4a14"/></linearGradient>
<linearGradient id="metal" x1="0" y1="0" x2="1" y2="1"><stop offset="0" stop-color="#f4f4f4"/><stop offset="1" stop-color="#9aa0a4"/></linearGradient>
<linearGradient id="skin" x1="0" y1="0" x2="0" y2="1"><stop offset="0" stop-color="#f6dcc0"/><stop offset="1" stop-color="#f0a070"/></linearGradient>
</defs><path d="M6.200 14.500L3.300 10.800Q2.800 9.600 4.200 9.800L7.300 12.200L6.300 5.300Q6.600 4.200 7.700 4.900L9.300 10.500L9.800 3.300Q10.500 2.300 11.300 3.300L11.800 10.500L13.500 4.400Q14.500 3.600 15 4.800L14.300 11.300L16.800 7.300Q17.900 6.900 17.900 8.200L15.500 14.500L14.500 20.500H8.500Z" fill="url(#skin)"/></svg>
<svg style="left:7px;top:135px;" width="24" height="24" viewBox="0 0 24 24"><path d="M8.500 5.300V17L11.300 14.400L13.300 18.600L15.200 17.700L13.200 13.600H16.800Z" fill="#0a0a0a" stroke="#e8e8e8" stroke-width="1.1" stroke-linejoin="round"/></svg>
<svg style="left:7px;top:162px;" width="24" height="24" viewBox="0 0 24 24"><path d="M4.500 20L6 15.500L12 9.500L14.500 12L8.500 18Z" fill="url(#metal)"/><path d="M4.500 20L7 17.500" stroke="#666" stroke-width="1"/><path d="M11 8.500L15.500 13" stroke="#8a5a10" stroke-width="2.400" stroke-linecap="round"/><ellipse cx="16.300" cy="7.600" rx="4" ry="3.100" transform="rotate(-45 16.300 7.600)" fill="#e0a020"/><ellipse cx="17.300" cy="6.400" rx="1.500" ry="1" transform="rotate(-45 17.300 6.400)" fill="#f8e090"/><path d="M19 5L21 3" stroke="#a07020" stroke-width="1.200"/></svg>
<svg style="left:7px;top:191px;" width="24" height="24" viewBox="0 0 24 24"><path d="M7 3.500V17H20.500M3.500 7H17V20.500" fill="none" stroke="#a0a0a0" stroke-width="1.900"/><path d="M7.500 16.500L16.500 7.500" stroke="#a0a0a0" stroke-width="1.500"/></svg>
<svg style="left:7px;top:219px;" width="24" height="24" viewBox="0 0 24 24"><path d="M4 14A5.500 5.500 0 0 0 9.500 21" fill="none" stroke="#e0e0e0" stroke-width="1" stroke-dasharray="2 1.400"/><path d="M6 19.500Q4.500 15 9.500 11.500L13 15Q10 20 6 19.500Z" fill="url(#wood)"/><path d="M9.500 11.500L14.500 7L17.500 10L13 15Z" fill="#f0f0f0"/><path d="M14.500 7L19.500 3Q21.500 3 21 5L17.500 10Z" fill="#d82838"/></svg>
<svg style="left:7px;top:246px;" width="24" height="24" viewBox="0 0 24 24"><path d="M12 12.500L21.500 21.500" stroke="#0a0a0a" stroke-width="2.600" stroke-linecap="round"/><path d="M19.500 19.500L21.500 21.500" stroke="#f0f0f0" stroke-width="2.200" stroke-linecap="round"/><path d="M9.500 3.500L10.800 7.500L15 7.800L11.600 10.200L12.800 14.200L9.500 11.800L6 14.200L7.300 10.200L4 7.800L8.200 7.500Z" fill="#f0c020"/><circle cx="16" cy="5.500" r="1" fill="#f0c020"/><circle cx="17" cy="10" r="0.800" fill="#f0c020"/><circle cx="9.500" cy="8.800" r="1.600" fill="#fff6c0"/></svg>
<svg style="left:7px;top:275px;" width="24" height="24" viewBox="0 0 24 24"><ellipse cx="11.500" cy="10" rx="8.300" ry="5.800" fill="none" stroke="#e08820" stroke-width="1.700"/><path d="M17 14Q20.500 15 18 18Q14 20 9 18" fill="none" stroke="#c87818" stroke-width="1.400"/></svg>
<svg style="left:26px;top:294.7px;" width="5.3" height="5.3" viewBox="0 0 5.3 5.3"><path d="M5.300 0V5.300H0Z" fill="#f0f0f0"/></svg>
<svg style="left:7px;top:303px;" width="24" height="24" viewBox="0 0 24 24"><path d="M8 10Q2.500 11 4 19.500Q6 16 8.500 15Z" fill="#2a78e0"/><path d="M5 12Q3.500 14 4.500 18" stroke="#40c0e0" stroke-width="1.200" fill="none"/><path d="M7 9.500L15.500 5.500L21 15.500L12.500 20Z" fill="url(#metal)"/><path d="M7 9.500L15.500 5.500" stroke="#e8e8e8" stroke-width="2"/><path d="M12.500 20L21 15.500" stroke="#70787c" stroke-width="1.400"/><path d="M10 8L13 3.500L15 5" stroke="#d0d0d0" stroke-width="1.200" fill="none"/></svg>
<div style="left:11px;top:335px;width:17px;height:17px;border-radius:50%;background:conic-gradient(from 0deg,#f02040,#f0a020,#e8e020,#40d820,#20c8a0,#2080f0,#6030e0,#c020d0,#f02040);"></div>
<svg style="left:7px;top:331px;" width="24" height="24" viewBox="0 0 24 24"><path d="M12.500 12.500L20 5" stroke="#f4f4f4" stroke-width="1.600"/><circle cx="12.500" cy="12.500" r="1.600" fill="#fff"/><circle cx="20.300" cy="4.700" r="1.300" fill="#fff"/></svg>
<svg style="left:7px;top:360px;" width="24" height="24" viewBox="0 0 24 24"><path d="M5 19.500Q3 15.500 8.500 12.500L11.500 15.500Q9.500 20.500 5 19.500Z" fill="url(#wood)"/><path d="M8.500 12.500L12.500 9L15 11.500L11.500 15.500Z" fill="#f0f0f0"/><path d="M12.500 9L19 2.500Q21.500 2.500 21 5L15 11.500Z" fill="#d82838"/></svg>
<svg style="left:26px;top:378.7px;" width="5.3" height="5.3" viewBox="0 0 5.3 5.3"><path d="M5.300 0V5.300H0Z" fill="#f0f0f0"/></svg>
<svg style="left:7px;top:388px;" width="24" height="24" viewBox="0 0 24 24"><path d="M10 7Q3 8.500 4.500 16Q6 21 12 20" fill="none" stroke="#e02888" stroke-width="3.200"/><path d="M7 18.500Q10 21.500 14 19.500" fill="none" stroke="#30a0e0" stroke-width="2.400"/><path d="M9.500 16.500Q8.500 13 12.500 11L15 13.500Q13.500 17.500 9.500 16.500Z" fill="url(#wood)"/><path d="M12.500 11L15.500 8.500L17.500 10.500L15 13.500Z" fill="#f0f0f0"/><path d="M15.500 8.500L20 3.500Q21.500 4 21 5.500L17.500 10.500Z" fill="#d82838"/></svg>
<svg style="left:7px;top:416px;" width="24" height="24" viewBox="0 0 24 24"><path d="M13 5.500L18.500 2.500L21.500 5.500L19.500 11.500Z" fill="#f0c040"/><path d="M18.500 2.500L21.500 5.500L21 3Z" fill="#e0a020"/><path d="M9 10L13 5.500L19.500 11.500L15.500 16Z" fill="#e8e8e8"/><path d="M10.500 8.500L17 14.500M12 7L18.500 13" stroke="#9a9a9a" stroke-width="0.900"/><path d="M4 15.500L9 10L15.500 16L10.500 21.500Z" fill="#f0a0a0"/><path d="M4 15.500L10.500 21.500L8 22L3 17.500Z" fill="#d86868"/></svg>
<svg style="left:26px;top:433.7px;" width="5.3" height="5.3" viewBox="0 0 5.3 5.3"><path d="M5.300 0V5.300H0Z" fill="#f0f0f0"/></svg>
<svg style="left:7px;top:445px;" width="24" height="24" viewBox="0 0 24 24"><g transform="translate(12 12.500) scale(0.880) translate(-12 -11.500)"><path d="M12 1.500Q17.500 6.500 16 10.500Q18.500 9 18 6.500Q21 12 18 16.500Q16 20 12 20Q7.500 20 5.500 16Q3.500 11.500 7 7.500Q7 10 8.500 10.500Q8 5.500 12 1.500Z" fill="#e85010"/><path d="M12 8Q15.500 12 15 15.500Q14.500 19 12 19Q9 19 8.500 15.500Q8.500 12.500 10.500 11Q10.500 12.500 11.500 13Q11 10 12 8Z" fill="#f8b020"/></g></svg>
<svg style="left:26px;top:461.7px;" width="5.3" height="5.3" viewBox="0 0 5.3 5.3"><path d="M5.300 0V5.300H0Z" fill="#f0f0f0"/></svg>
<svg style="left:7px;top:471px;" width="24" height="24" viewBox="0 0 24 24"><path d="M9.500 4.500H14.500V9.500H9.500Z" fill="#3088d0"/><path d="M9 3.500H15V5.500H9Z" fill="#50a8e8"/><path d="M11 9.500H13V13H11Z" fill="#c0c0c0"/><path d="M5.500 13H18.500L21 18.500H3Z" fill="#e8b080"/><path d="M3 18.500H21V20H3Z" fill="#b06830"/><path d="M6.500 14.500H17.500" stroke="#f8d8b8" stroke-width="1"/></svg>
<svg style="left:7px;top:498px;" width="24" height="24" viewBox="0 0 24 24"><path d="M3.500 11Q9 4 16 6.500" fill="none" stroke="#e8eef4" stroke-width="2.400"/><path d="M16.500 12Q19.500 15 18.500 20" fill="none" stroke="#e8eef4" stroke-width="2.400"/><path d="M3.500 11L6 8.500" stroke="#4070b0" stroke-width="2.400"/><path d="M4.500 20Q3 16 8 13L11 16Q9 21 4.500 20Z" fill="url(#wood)"/><path d="M8 13L12 9.500L14.500 12L11 16Z" fill="#f0f0f0"/><path d="M12 9.500L17.500 4.500Q19.500 4.500 19 6.500L14.500 12Z" fill="#d82838"/></svg>
<svg style="left:7px;top:528px;" width="24" height="24" viewBox="0 0 24 24"><path d="M12 2.500Q18.500 11.500 18 15Q17.500 20.500 12 20.500Q6.500 20.500 6 15Q5.500 11.500 12 2.500Z" fill="#b8d0d8"/><path d="M11 6Q7.500 12 8 15.500" stroke="#e8f4f8" stroke-width="1.600" fill="none"/><path d="M12 20.500Q17.500 20.500 18 15" stroke="#7a98a4" stroke-width="1.200" fill="none"/></svg>
<svg style="left:26px;top:545.7px;" width="5.3" height="5.3" viewBox="0 0 5.3 5.3"><path d="M5.300 0V5.300H0Z" fill="#f0f0f0"/></svg>
<svg style="left:7px;top:556px;" width="24" height="24" viewBox="0 0 24 24"><circle cx="7.600" cy="15" r="4.700" fill="none" stroke="#dcdcdc" stroke-width="1.300"/><path d="M10 17Q8.500 12.500 14 9L17 12Q15.500 17.500 10 17Z" fill="url(#wood)"/><path d="M14 9L16.500 6.500L19 9L17 12Z" fill="#f0e8e8"/><path d="M16.500 6.500L19.500 2.500Q21 3 20.500 4.500L19 9Z" fill="#d82848"/></svg>
<svg style="left:26px;top:573.7px;" width="5.3" height="5.3" viewBox="0 0 5.3 5.3"><path d="M5.300 0V5.300H0Z" fill="#f0f0f0"/></svg>
<svg style="left:7px;top:583px;" width="24" height="24" viewBox="0 0 24 24"><path d="M8.700 7L16.300 12.300L8.700 17Z" fill="#fff" stroke="#1a1a1a" stroke-width="0.600"/></svg>
<svg style="left:26px;top:602.7px;" width="5.3" height="5.3" viewBox="0 0 5.3 5.3"><path d="M5.300 0V5.300H0Z" fill="#f0f0f0"/></svg>
<svg style="left:7px;top:611px;" width="24" height="24" viewBox="0 0 24 24"><defs><radialGradient id="bl" cx="40%" cy="35%" r="70%"><stop offset="0" stop-color="#48a8f0"/><stop offset="1" stop-color="#2880d0"/></radialGradient></defs><circle cx="12" cy="12" r="7.600" fill="url(#bl)"/></svg>
<svg style="left:26px;top:629.7px;" width="5.3" height="5.3" viewBox="0 0 5.3 5.3"><path d="M5.300 0V5.300H0Z" fill="#f0f0f0"/></svg>
<span style="left:10px;top:641px;width:18px;text-align:center;font-family:'Liberation Serif',serif;font-size:23px;line-height:24px;color:#d4d4d4;">A</span>
<svg style="left:26px;top:658.7px;" width="5.3" height="5.3" viewBox="0 0 5.3 5.3"><path d="M5.300 0V5.300H0Z" fill="#f0f0f0"/></svg>
<svg style="left:7px;top:668px;" width="24" height="24" viewBox="0 0 24 24"><path d="M7 3.500H15.500Q20 5 19.500 10L20 19.500H4L5.500 10Z" fill="none" stroke="#b8b8b8" stroke-width="1.100"/><path d="M6.300 8H19.500M5.300 12H19.800M4.600 16H20M11 3.500L10 10L9 19.500M15 3.500L15 10L14.700 19.500" fill="none" stroke="#b8b8b8" stroke-width="1"/></svg>
<svg style="left:26px;top:686.7px;" width="5.3" height="5.3" viewBox="0 0 5.3 5.3"><path d="M5.300 0V5.300H0Z" fill="#f0f0f0"/></svg>
<svg style="left:7px;top:695px;" width="24" height="24" viewBox="0 0 24 24"><path d="M14.500 13.500L20.500 20" stroke="#d88830" stroke-width="2.600" stroke-linecap="round"/><circle cx="10.500" cy="9" r="6.200" fill="#58a8e8" stroke="#e4eef4" stroke-width="1.600"/><path d="M6.500 8Q8 4.500 11.500 5" stroke="#c8e4f8" stroke-width="1.400" fill="none"/></svg>
</body></html>
